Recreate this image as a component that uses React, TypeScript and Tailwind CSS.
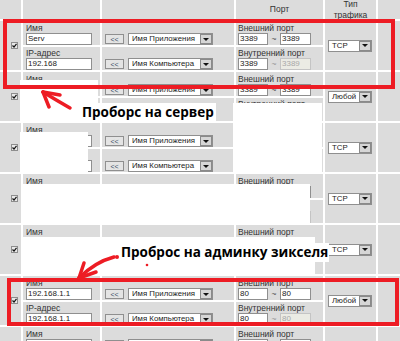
import { Fragment } from "react";

type Entry = {
  name: string;
  ip: string;
  ext1: string;
  ext2: string;
  int1: string;
  int2: string;
  type: string;
};

const entries: Entry[] = [
  { name: "Serv", ip: "192.168", ext1: "3389", ext2: "3389", int1: "3389", int2: "3389", type: "TCP" },
  { name: "", ip: "", ext1: "3389", ext2: "3389", int1: "", int2: "", type: "Любой" },
  { name: "", ip: "", ext1: "", ext2: "", int1: "", int2: "", type: "TCP" },
  { name: "", ip: "", ext1: "", ext2: "", int1: "", int2: "", type: "TCP" },
  { name: "", ip: "", ext1: "", ext2: "", int1: "", int2: "", type: "TCP" },
  { name: "192.168.1.1", ip: "192.168.1.1", ext1: "80", ext2: "80", int1: "80", int2: "80", type: "Любой" },
  { name: "", ip: "", ext1: "", ext2: "", int1: "", int2: "", type: "TCP" },
];

function Field({ value, className, disabled }: { value: string; className: string; disabled?: boolean }) {
  return (
    <div
      className={`h-[12px] overflow-hidden whitespace-nowrap border px-[1px] text-[8px] leading-[10px] ${
        disabled ? "border-[#c4c4c4] bg-[#ebebe4] text-[#a8a8a8]" : "border-[#8f8f8f] bg-white text-[#222]"
      } ${className}`}
    >
      {value}
    </div>
  );
}

function Select({ text, className }: { text: string; className: string }) {
  return (
    <div className={`flex h-[12px] items-stretch border border-[#8f8f8f] bg-white ${className}`}>
      <span className="flex-1 overflow-hidden whitespace-nowrap pl-[3px] text-[7.8px] leading-[10px] text-[#222]">
        {text}
      </span>
      <span className="flex w-[12px] items-center justify-center border border-[#8a8a8a] bg-[#d6d6d6]">
        <svg width="6" height="3" viewBox="0 0 6 3">
          <path d="M0 0h6L3 3z" fill="#111" />
        </svg>
      </span>
    </div>
  );
}

function Back() {
  return (
    <div className="mb-[1px] flex h-[10px] w-[19px] items-center justify-center border border-[#8f8f8f] bg-[#e4e4e4] text-[7px] leading-none text-[#3d4f6a]">
      &lt;&lt;
    </div>
  );
}

function Check() {
  return (
    <div className="flex h-[7px] w-[7px] items-center justify-center border border-[#8d8d8d] bg-[#e9e9e9]">
      <svg width="5" height="5" viewBox="0 0 5 5">
        <path d="M0.5 2.5L2 4L4.5 0.8" stroke="#111" strokeWidth="1.2" fill="none" />
      </svg>
    </div>
  );
}

const cell = "bg-[#dcdcdc]";
const label = "text-[8.5px] leading-[10px] text-[#333] whitespace-nowrap";

export default function App() {
  return (
    <div className="relative h-[341px] w-[400px] overflow-hidden bg-white font-['Liberation_Sans',Arial,sans-serif]">
      <div className="grid grid-cols-[21px_77px_132px_87px_51px_1fr] grid-rows-[19px_repeat(7,24px_23px)] gap-[2px]">
        <div className={cell} />
        <div className={cell} />
        <div className={cell} />
        <div className={`${cell} flex items-center justify-center text-[8.5px] text-[#333]`}>Порт</div>
        <div className={`${cell} flex flex-col items-center justify-center text-[8.5px] leading-[11px] text-[#333]`}>
          <span>Тип</span>
          <span>трафика</span>
        </div>
        <div className={cell} />

        {entries.map((e, i) => (
          <Fragment key={i}>
            <div className={`${cell} row-span-2 flex items-center pl-[11px]`}>
              <Check />
            </div>
            <div className={`${cell} flex flex-col justify-end pl-[3px]`}>
              <span className={label}>Имя</span>
              <Field value={e.name} className="w-[66px]" />
            </div>
            <div className={`${cell} flex items-end gap-[4px] pl-[3px]`}>
              <Back />
              <Select text="Имя Приложения" className="w-[85px]" />
            </div>
            <div className={`${cell} flex flex-col justify-end pl-[2px]`}>
              <span className={label}>Внешний порт</span>
              <div className="flex items-center">
                <Field value={e.ext1} className="w-[30px]" />
                <span className="w-[12px] text-center text-[8.5px] leading-[10px] text-[#555]">~</span>
                <Field value={e.ext2} className="w-[31px]" />
              </div>
            </div>
            <div className={`${cell} row-span-2 flex items-center pl-[3px]`}>
              <Select text={e.type} className="w-[44px]" />
            </div>
            <div className={`${cell} row-span-2`} />

            <div className={`${cell} flex flex-col justify-end pl-[3px]`}>
              <span className={label}>IP-адрес</span>
              <Field value={e.ip} className="w-[66px]" />
            </div>
            <div className={`${cell} flex items-end gap-[4px] pl-[3px]`}>
              <Back />
              <Select text="Имя Компьютера" className="w-[85px]" />
            </div>
            <div className={`${cell} flex flex-col justify-end pl-[2px]`}>
              <span className={label}>Внутренний порт</span>
              <div className="flex items-center">
                <Field value={e.int1} className="w-[30px]" />
                <span className="w-[12px] text-center text-[8.5px] leading-[10px] text-[#999]">~</span>
                <Field value={e.int2} className="w-[31px]" disabled />
              </div>
            </div>
          </Fragment>
        ))}
      </div>

      {/* закрашенные области */}
      <div className="absolute left-[20px] top-[80px] h-[42px] w-[78px] bg-white" />
      <div className="absolute left-[233px] top-[103px] h-[69px] w-[89px] bg-white" />
      <div className="absolute left-[20px] top-[132px] h-[41px] w-[68px] bg-white" />
      <div className="absolute left-[21px] top-[184px] h-[39px] w-[289px] bg-white" />
      <div className="absolute left-[21px] top-[237px] h-[39px] w-[294px] bg-white" />

      {/* пометки */}
      <div className="absolute left-[3px] top-[19px] h-[70px] w-[392px] border-[4px] border-[#ed1c24]" />
      <div className="absolute left-[7px] top-[278px] h-[48px] w-[392px] border-[4px] border-[#ed1c24]" />

      <div className="absolute left-[80px] top-[103px] bg-white px-[2px] font-['Open_Sans',sans-serif] text-[13.5px] font-bold leading-[19px] text-black">
        Проборс на сервер
      </div>
      <div className="absolute left-[120px] top-[243px] bg-white px-[1px] font-['Open_Sans',sans-serif] text-[13.5px] font-bold leading-[19px] text-black">
        Проброс на админку зикселя
      </div>

      <svg className="pointer-events-none absolute left-0 top-0" width="400" height="341">
        <g stroke="#ed1c24" strokeWidth="3.5" strokeLinecap="round" fill="none">
          <path d="M43 92 Q56 100 70 108" />
          <path d="M43 92 L60 95" />
          <path d="M43 92 L49 107" />
          <path d="M114 257 Q95 262 79 278" />
          <path d="M79 278 L84 263" />
          <path d="M79 278 L96 272" />
        </g>
        <circle cx="117" cy="257" r="2" fill="#ed1c24" />
        <circle cx="147" cy="265" r="1.3" fill="#ed1c24" />
      </svg>
    </div>
  );
}
